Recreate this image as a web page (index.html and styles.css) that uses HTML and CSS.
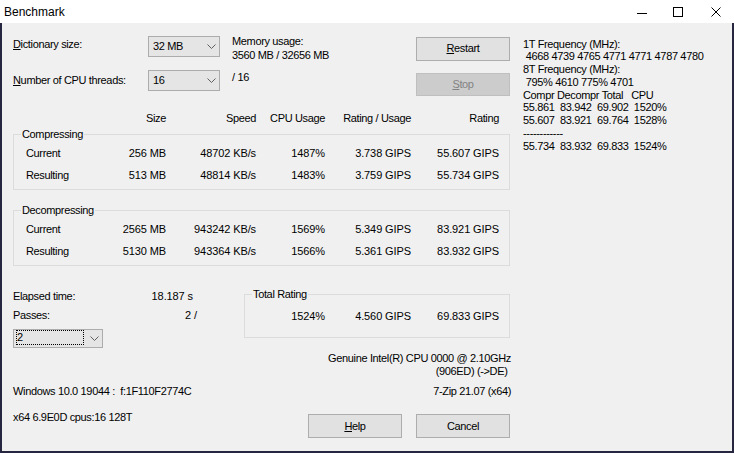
FILE: index.html
```html
<!DOCTYPE html>
<html>
<head>
<meta charset="utf-8">
<title>Benchmark</title>
<link rel="stylesheet" href="styles.css">
</head>
<body>
<div class="window">
  <div class="titlebar">
    <span class="title">Benchmark</span>
    <div class="caps">
      <svg class="cap-min" width="10" height="10" viewBox="0 0 10 10"><line x1="0" y1="6.5" x2="10" y2="6.5" stroke="#000" stroke-width="1"/></svg>
      <svg class="cap-max" width="10" height="10" viewBox="0 0 10 10"><rect x="0.5" y="0.5" width="9" height="9" fill="none" stroke="#000" stroke-width="1"/></svg>
      <svg class="cap-close" width="10" height="10" viewBox="0 0 10 10"><path d="M0.5 0.5 L9.5 9.5 M9.5 0.5 L0.5 9.5" fill="none" stroke="#000" stroke-width="1"/></svg>
    </div>
  </div>
  <div class="client">
    <div class="left">
      <div class="setup">
        <div class="lbl"><u>D</u>ictionary size:</div>
        <div class="combo c1"><span>32 MB</span><svg class="chev" width="9" height="5" viewBox="0 0 9 5"><polyline points="0.5,0.5 4.5,4.5 8.5,0.5" fill="none" stroke="#606060" stroke-width="1"/></svg></div>
        <div class="mem">Memory usage:<br>3560 MB / 32656 MB</div>
        <button class="btn restart" type="button"><u>R</u>estart</button>
        <div class="lbl"><u>N</u>umber of CPU threads:</div>
        <div class="combo c2"><span>16</span><svg class="chev" width="9" height="5" viewBox="0 0 9 5"><polyline points="0.5,0.5 4.5,4.5 8.5,0.5" fill="none" stroke="#606060" stroke-width="1"/></svg></div>
        <div class="threads">/ 16</div>
        <button class="btn stop" type="button" disabled><u>S</u>top</button>
      </div>

      <div class="cols head">
        <span></span><span>Size</span><span>Speed</span><span>CPU Usage</span><span>Rating / Usage</span><span>Rating</span>
      </div>

      <fieldset class="group comp">
        <legend>Compressing</legend>
        <div class="cols row"><span>Current</span><span class="v">256 MB</span><span class="v">48702 KB/s</span><span class="v">1487%</span><span class="v">3.738 GIPS</span><span class="v">55.607 GIPS</span></div>
        <div class="cols row"><span>Resulting</span><span class="v">513 MB</span><span class="v">48814 KB/s</span><span class="v">1483%</span><span class="v">3.759 GIPS</span><span class="v">55.734 GIPS</span></div>
      </fieldset>

      <fieldset class="group decomp">
        <legend>Decompressing</legend>
        <div class="cols row"><span>Current</span><span class="v">2565 MB</span><span class="v">943242 KB/s</span><span class="v">1569%</span><span class="v">5.349 GIPS</span><span class="v">83.921 GIPS</span></div>
        <div class="cols row"><span>Resulting</span><span class="v">5130 MB</span><span class="v">943364 KB/s</span><span class="v">1566%</span><span class="v">5.361 GIPS</span><span class="v">83.932 GIPS</span></div>
      </fieldset>

      <div class="lower">
        <div class="stats">
          <span>Elapsed time:</span><span class="v sval">18.187 s</span>
          <span class="prow">Passes:</span><span class="v sval prow passv">2 /</span>
          <div class="combo passes"><span class="focus">2</span><svg class="chev" width="9" height="5" viewBox="0 0 9 5"><polyline points="0.5,0.5 4.5,4.5 8.5,0.5" fill="none" stroke="#606060" stroke-width="1"/></svg></div>
        </div>
        <fieldset class="group total">
          <legend>Total Rating</legend>
          <div class="tcols"><span class="v">1524%</span><span class="v">4.560 GIPS</span><span class="v">69.833 GIPS</span></div>
        </fieldset>
      </div>

      <div class="cpu">
        <span class="cpu1">Genuine Intel(R) CPU 0000 @ 2.10GHz</span>
        <span class="cpu2">(906ED) (-&gt;DE)</span>
      </div>

      <div class="info">
        <span>Windows 10.0 19044 :&nbsp; f:1F110F2774C</span>
        <span>7-Zip 21.07 (x64)</span>
      </div>

      <div class="bottom">
        <span class="sys">x64 6.9E0D cpus:16 128T</span>
        <div class="actions">
          <button class="btn big" type="button"><u>H</u>elp</button>
          <button class="btn big" type="button">Cancel</button>
        </div>
      </div>
    </div>
    <div class="right">1T Frequency (MHz):
 4668 4739 4765 4771 4771 4787 4780
8T Frequency (MHz):
 795% 4610 775% 4701
Compr Decompr Total   CPU
55.861  83.942  69.902  1520%
55.607  83.921  69.764  1528%
------------
55.734  83.932  69.833  1524%</div>
  </div>
</div>
</body>
</html>
```

FILE: styles.css
```css
* { box-sizing: border-box; }

html, body {
  margin: 0;
  padding: 0;
}

body {
  width: 734px;
  height: 453px;
  overflow: hidden;
  background: #262640;
  font-family: "Liberation Sans", Arial, sans-serif;
  font-size: 11px;
  color: #000;
  letter-spacing: -0.35px;
}

.window {
  width: 734px;
  height: 453px;
  display: flex;
  flex-direction: column;
}

.titlebar {
  height: 23px;
  flex-shrink: 0;
  background: #fff;
  display: flex;
  align-items: center;
}

.title {
  font-size: 12px;
  line-height: 16px;
  padding-left: 4px;
  letter-spacing: 0;
}

.caps {
  margin-left: auto;
  margin-right: 13px;
  display: flex;
  align-items: center;
}

.caps svg { display: block; }
.cap-min { margin-right: 26px; }
.cap-max { margin-right: 28px; }

.client {
  flex: 1;
  display: flex;
  background: #f0f0f0;
  border-left: 2px solid #262640;
  border-right: 2px solid #262640;
  border-bottom: 2px solid #262640;
}

.left {
  width: 509px;
  flex-shrink: 0;
  padding: 11px 0 0 11px;
}

.right {
  padding: 14.6px 0 0 12px;
  line-height: 12.75px;
  white-space: pre;
}

/* top settings */
.setup {
  display: grid;
  grid-template-columns: 135px 72px 12px 184px 94px;
  grid-template-rows: 36px 26px;
  align-items: start;
}

.lbl {
  grid-column: 1;
  line-height: 13px;
  margin-top: 4px;
}

.combo {
  height: 21px;
  border: 1px solid #acacac;
  background: #e5e5e5;
  display: flex;
  align-items: center;
  padding: 0 3px 0 4px;
  line-height: 19px;
}

.combo .chev {
  margin-left: auto;
  display: block;
}

.c1, .c2 { grid-column: 2; }
.c1 { margin-top: 2px; }

.mem {
  grid-column: 4;
  line-height: 14px;
}

.threads {
  grid-column: 4;
  line-height: 13px;
  margin-top: 1px;
}

.btn {
  font: inherit;
  letter-spacing: inherit;
  color: #000;
  background: #e1e1e1;
  border: 1px solid #adadad;
  border-radius: 0;
  margin: 0;
  padding: 0;
  width: 94px;
  height: 24px;
  line-height: 20px;
}

.restart {
  grid-column: 5;
  margin-top: 3px;
  padding-bottom: 2px;
}

.stop {
  grid-column: 5;
  margin-top: 3px;
  height: 23px;
  line-height: 21px;
  background: #cccccc;
  border-color: #bfbfbf;
  color: #838383;
}

.big {
  line-height: 22px;
}

/* tables */
.cols {
  display: grid;
  grid-template-columns: 84px 56px 90px 69px 86px 88px;
  line-height: 13px;
}

.cols > span { text-align: right; }
.cols > span:first-child { text-align: left; }

.v { letter-spacing: -0.1px; }

.head {
  padding-left: 13px;
  margin-top: 16px;
}

.group {
  margin: 0;
  min-width: 0;
  border: 1px solid #dcdcdc;
  padding: 6px 0 7.5px 0;
}

.group legend {
  padding: 0 1px;
  margin-left: 7px;
  line-height: 13px;
}

.comp, .decomp {
  width: 497px;
}

.comp { margin-top: 3px; }
.decomp { margin-top: 14px; }

.row { padding-left: 12px; }
.row + .row { margin-top: 8.5px; }

/* lower */
.lower {
  display: flex;
  align-items: flex-start;
  margin-top: 22px;
}

.stats {
  width: 180px;
  padding-top: 2px;
  display: grid;
  grid-template-columns: 1fr auto;
  line-height: 13px;
}

.sval { text-align: right; }
.prow { margin-top: 5.5px; }
.passv { margin-right: -4px; }

.passes {
  grid-column: 1 / -1;
  width: 90px;
  height: 19px;
  margin-top: 7.5px;
  padding: 0 3px 0 2px;
  align-items: flex-start;
}

.passes .chev { margin-top: 6px; }

.focus {
  width: 68px;
  height: 15px;
  border: 1px dotted #000;
  line-height: 13px;
}

.total {
  width: 266px;
  margin-left: auto;
  margin-right: 1px;
  padding: 9px 0 14px 0;
}

.tcols {
  display: grid;
  grid-template-columns: 80px 86px 88px;
  line-height: 13px;
}

.tcols > span { text-align: right; }

.cpu {
  margin-top: 3.5px;
  line-height: 13px;
  text-align: right;
}

.cpu1, .cpu2 { display: block; }
.cpu2 { padding-right: 3.5px; }

.info {
  display: flex;
  justify-content: space-between;
  margin-top: 7.5px;
  line-height: 13px;
}

.bottom {
  display: flex;
  align-items: flex-start;
}

.sys {
  margin-top: 12.5px;
  line-height: 13px;
}

.actions {
  margin-left: auto;
  margin-right: 1px;
  margin-top: 16px;
  display: flex;
  gap: 14px;
}
```
